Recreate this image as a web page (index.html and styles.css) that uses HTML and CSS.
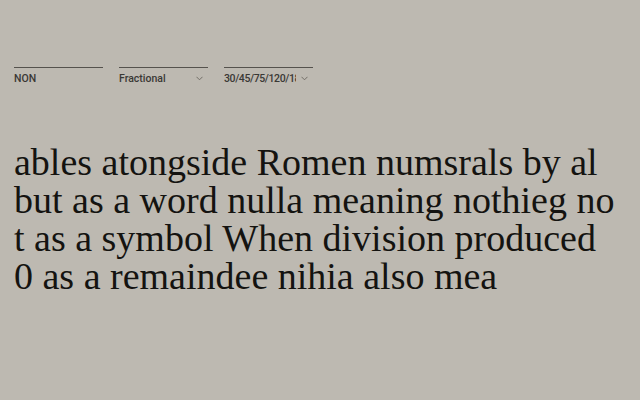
FILE: index.html
```html
<!DOCTYPE html>
<html>
<head>
<meta charset="utf-8">
<link rel="stylesheet" href="styles.css">
</head>
<body>
<div class="page">
  <div class="controls">
    <div class="field"><span class="label">NON</span></div>
    <div class="field"><span class="label">Fractional</span><svg class="chev" width="7" height="5" viewBox="0 0 7 5"><path d="M0.5 0.8 L3.5 3.8 L6.5 0.8" fill="none" stroke="#6a6760" stroke-width="0.9"/></svg></div>
    <div class="field"><span class="label clip">30/45/75/120/180</span><svg class="chev" width="7" height="5" viewBox="0 0 7 5"><path d="M0.5 0.8 L3.5 3.8 L6.5 0.8" fill="none" stroke="#6a6760" stroke-width="0.9"/></svg></div>
  </div>
  <div class="text">
    <span class="line">ables atongside Romen numsrals by al</span>
    <span class="line">but as a word nulla meaning nothieg no</span>
    <span class="line">t as a symbol When division produced</span>
    <span class="line">0 as a remaindee nihia also mea</span>
  </div>
</div>
</body>
</html>
```
FILE: styles.css
```css
html, body {
  margin: 0;
  padding: 0;
  background: #bdb9b1;
}
.page {
  width: 640px;
  height: 400px;
  padding: 67px 14px 0 14px;
  box-sizing: border-box;
}
.controls {
  display: flex;
  gap: 16px;
}
.field {
  width: 89px;
  border-top: 1px solid #55524d;
  display: flex;
  align-items: center;
  justify-content: space-between;
  padding-top: 3px;
  height: 14px;
}
.label {
  font-family: "Roboto", "Liberation Sans", sans-serif;
  font-size: 10.5px;
  font-weight: 500;
  color: #3a3835;
  white-space: nowrap;
  overflow: hidden;
}
.clip {
  width: 72px;
  letter-spacing: -0.4px;
}
.chev {
  margin-right: 5px;
  display: block;
}
.text {
  margin-top: 58px;
  font-family: "Liberation Serif", serif;
  font-size: 38px;
  line-height: 38px;
  color: #141310;
}
.line {
  display: block;
  white-space: nowrap;
}
```
